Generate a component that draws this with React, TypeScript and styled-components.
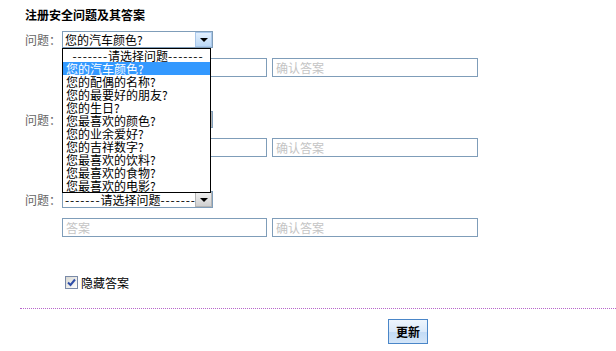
import React from 'react';
import styled, { createGlobalStyle } from 'styled-components';

const Global = createGlobalStyle`
  html, body { margin: 0; padding: 0; background: #fff; }
  body {
    font-family: "Noto Sans CJK SC", "Liberation Sans", sans-serif;
    font-size: 12px;
    color: #000;
  }
  * { box-sizing: border-box; }
`;

const Page = styled.div`
  width: 616px;
  height: 351px;
  padding-top: 8px;
  overflow: hidden;
`;

const Title = styled.h3`
  margin: 0 0 0 25px;
  height: 14px;
  font-size: 12px;
  line-height: 14px;
  font-weight: bold;
`;

const Form = styled.div`
  margin-top: 9px;
  padding-left: 25px;
  display: flex;
  flex-direction: column;
`;

const Block = styled.div<{ $top?: boolean }>`
  position: relative;
  z-index: ${(p) => (p.$top ? 3 : 1)};
  height: 80px;
  display: flex;
  flex-direction: column;
  gap: 10px;
`;

const QRow = styled.div`
  position: relative;
  display: flex;
  align-items: center;
  height: 17px;
`;

const Label = styled.span`
  width: 37px;
  color: #666;
  line-height: 17px;
  white-space: nowrap;
`;

const Select = styled.div`
  width: 151px;
  height: 17px;
  flex: none;
  border: 1px solid #7f9db9;
  background: #fff;
  display: flex;
  align-items: center;
`;

const SelectText = styled.span`
  flex: 1 1 0;
  min-width: 0;
  padding-left: 2px;
  line-height: 15px;
  white-space: nowrap;
`;

const Dashes = styled.span`
  letter-spacing: 0.9px;
`;

const ArrowBtn = styled.span<{ $active?: boolean }>`
  width: 17px;
  height: 15px;
  flex: none;
  display: flex;
  align-items: center;
  justify-content: center;
  border: 1px solid ${(p) => (p.$active ? '#a9c7ea' : '#b4b4b4')};
  background: ${(p) =>
    p.$active
      ? 'linear-gradient(#e3f0fd, #bcd9f7)'
      : 'linear-gradient(#f0f0f0, #d0d0d0)'};
  &::after {
    content: '';
    border-left: 4px solid transparent;
    border-right: 4px solid transparent;
    border-top: 4px solid #000;
  }
`;

const List = styled.ul`
  position: absolute;
  top: 17px;
  left: 37px;
  width: 149px;
  margin: 0;
  padding: 0;
  list-style: none;
  background: #fff;
  border: 1px solid #000;
`;

const Item = styled.li<{ $selected?: boolean; $center?: boolean }>`
  height: 13px;
  line-height: 13px;
  padding-left: 3px;
  white-space: nowrap;
  text-align: ${(p) => (p.$center ? 'center' : 'left')};
  background: ${(p) => (p.$selected ? '#3399ff' : 'transparent')};
  color: ${(p) => (p.$selected ? '#fff' : '#000')};
`;

const ARow = styled.div`
  display: flex;
  gap: 5px;
  padding-left: 37px;
`;

const Input = styled.input<{ $w: number }>`
  width: ${(p) => p.$w}px;
  height: 19px;
  margin: 0;
  padding: 0 0 0 3px;
  border: 1px solid #7f9db9;
  font-family: "Noto Sans CJK SC", "Liberation Sans", sans-serif;
  font-size: 12px;
  outline: none;
  &::placeholder { color: #c4c4c4; }
`;

const CheckRow = styled.label`
  margin: 5px 0 0 65px;
  height: 13px;
  display: flex;
  align-items: center;
  gap: 3px;
  line-height: 13px;
`;

const CheckBox = styled.span`
  width: 13px;
  height: 13px;
  border: 1px solid #7a8aa8;
  background: linear-gradient(135deg, #d8d8d2, #fff);
  display: flex;
  align-items: center;
  justify-content: center;
`;

const Divider = styled.div`
  margin: 19px 0 0 20px;
  border-top: 1px dotted #b866cc;
`;

const Button = styled.button`
  margin: 10px 0 0 388px;
  width: 40px;
  height: 25px;
  padding: 0;
  border: 1px solid #4a86c8;
  background: linear-gradient(#eef5fd 0%, #dbe9f9 50%, #c2dbf5 51%, #d3e5f8 100%);
  font-family: "Noto Sans CJK SC", "Liberation Sans", sans-serif;
  font-size: 12px;
  font-weight: bold;
  color: #000;
  display: block;
`;

const Placeholder = () => (
  <>
    <Dashes>-------</Dashes>请选择问题<Dashes>-------</Dashes>
  </>
);

const options = [
  '您的汽车颜色?',
  '您的配偶的名称?',
  '您的最要好的朋友?',
  '您的生日?',
  '您最喜欢的颜色?',
  '您的业余爱好?',
  '您的吉祥数字?',
  '您最喜欢的饮料?',
  '您最喜欢的食物?',
  '您最喜欢的电影?',
];

const Answers = () => (
  <ARow>
    <Input $w={205} placeholder="答案" />
    <Input $w={206} placeholder="确认答案" />
  </ARow>
);

export default function App() {
  return (
    <Page>
      <Global />
      <Title>注册安全问题及其答案</Title>
      <Form>
        <Block $top>
          <QRow>
            <Label>问题：</Label>
            <Select>
              <SelectText>您的汽车颜色?</SelectText>
              <ArrowBtn $active />
            </Select>
            <List>
              <Item $center>
                <Placeholder />
              </Item>
              {options.map((o, i) => (
                <Item key={o} $selected={i === 0}>
                  {o}
                </Item>
              ))}
            </List>
          </QRow>
          <Answers />
        </Block>
        <Block>
          <QRow>
            <Label>问题：</Label>
            <Select>
              <SelectText>
                <Placeholder />
              </SelectText>
              <ArrowBtn />
            </Select>
          </QRow>
          <Answers />
        </Block>
        <Block>
          <QRow>
            <Label>问题：</Label>
            <Select>
              <SelectText>
                <Placeholder />
              </SelectText>
              <ArrowBtn />
            </Select>
          </QRow>
          <Answers />
        </Block>
      </Form>
      <CheckRow>
        <CheckBox>
          <svg width="9" height="9" viewBox="0 0 9 9">
            <path d="M1 4.5 L3.5 7 L8 1.5" fill="none" stroke="#2f4ea8" strokeWidth="2" />
          </svg>
        </CheckBox>
        隐藏答案
      </CheckRow>
      <Divider />
      <Button>更新</Button>
    </Page>
  );
}
